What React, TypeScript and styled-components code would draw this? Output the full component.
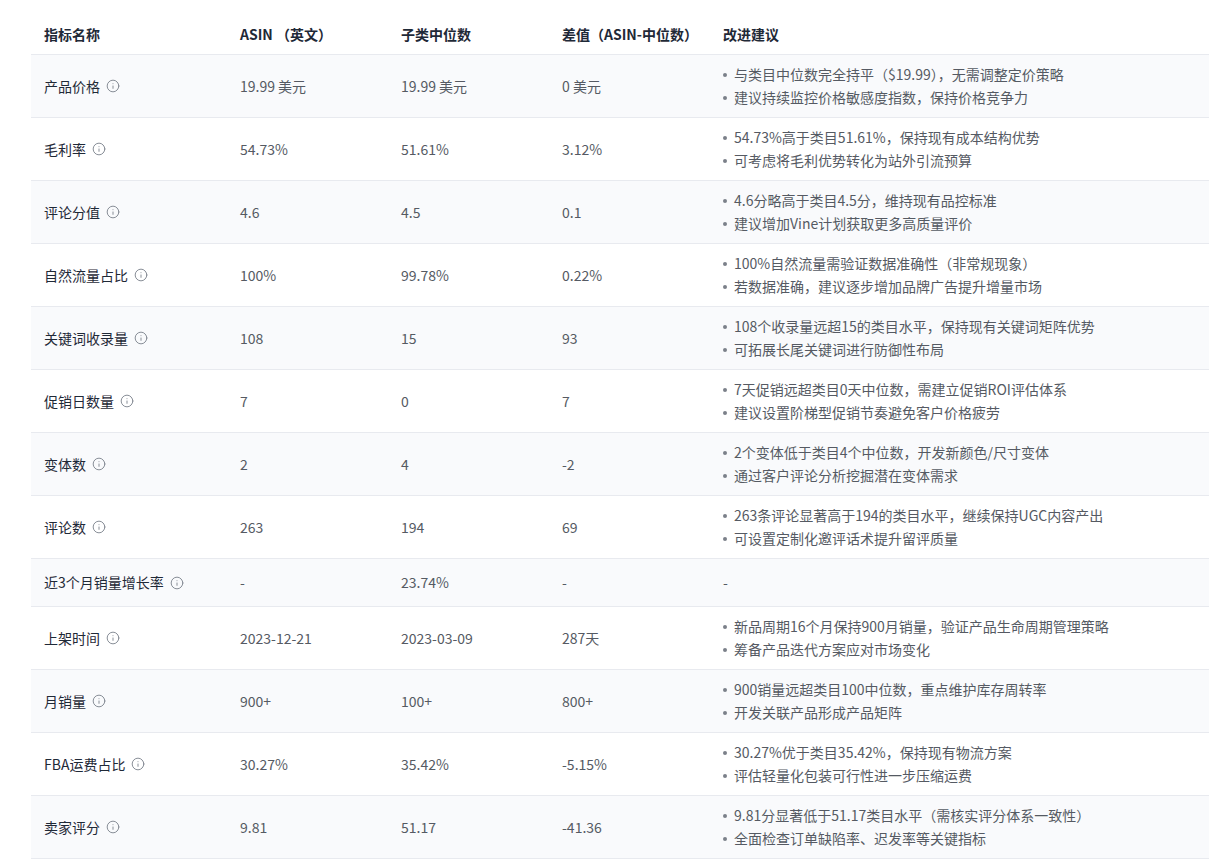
import React from "react";
import styled, { createGlobalStyle } from "styled-components";
import { Info } from "lucide-react";

const GlobalStyle = createGlobalStyle`
    html, body {
        margin: 0;
        padding: 0;
        background: #fff;
        font-family: "Noto Sans CJK SC", "Noto Sans", sans-serif;
    }
`

type Row = {
    name: string
    asin: string
    median: string
    diff: string
    tips: string[]
}

const rows: Row[] = [
    { name: "产品价格", asin: "19.99 美元", median: "19.99 美元", diff: "0 美元", tips: ["与类目中位数完全持平（$19.99），无需调整定价策略", "建议持续监控价格敏感度指数，保持价格竞争力"] },
    { name: "毛利率", asin: "54.73%", median: "51.61%", diff: "3.12%", tips: ["54.73%高于类目51.61%，保持现有成本结构优势", "可考虑将毛利优势转化为站外引流预算"] },
    { name: "评论分值", asin: "4.6", median: "4.5", diff: "0.1", tips: ["4.6分略高于类目4.5分，维持现有品控标准", "建议增加Vine计划获取更多高质量评价"] },
    { name: "自然流量占比", asin: "100%", median: "99.78%", diff: "0.22%", tips: ["100%自然流量需验证数据准确性（非常规现象）", "若数据准确，建议逐步增加品牌广告提升增量市场"] },
    { name: "关键词收录量", asin: "108", median: "15", diff: "93", tips: ["108个收录量远超15的类目水平，保持现有关键词矩阵优势", "可拓展长尾关键词进行防御性布局"] },
    { name: "促销日数量", asin: "7", median: "0", diff: "7", tips: ["7天促销远超类目0天中位数，需建立促销ROI评估体系", "建议设置阶梯型促销节奏避免客户价格疲劳"] },
    { name: "变体数", asin: "2", median: "4", diff: "-2", tips: ["2个变体低于类目4个中位数，开发新颜色/尺寸变体", "通过客户评论分析挖掘潜在变体需求"] },
    { name: "评论数", asin: "263", median: "194", diff: "69", tips: ["263条评论显著高于194的类目水平，继续保持UGC内容产出", "可设置定制化邀评话术提升留评质量"] },
    { name: "近3个月销量增长率", asin: "-", median: "23.74%", diff: "-", tips: [] },
    { name: "上架时间", asin: "2023-12-21", median: "2023-03-09", diff: "287天", tips: ["新品周期16个月保持900月销量，验证产品生命周期管理策略", "筹备产品迭代方案应对市场变化"] },
    { name: "月销量", asin: "900+", median: "100+", diff: "800+", tips: ["900销量远超类目100中位数，重点维护库存周转率", "开发关联产品形成产品矩阵"] },
    { name: "FBA运费占比", asin: "30.27%", median: "35.42%", diff: "-5.15%", tips: ["30.27%优于类目35.42%，保持现有物流方案", "评估轻量化包装可行性进一步压缩运费"] },
    { name: "卖家评分", asin: "9.81", median: "51.17", diff: "-41.36", tips: ["9.81分显著低于51.17类目水平（需核实评分体系一致性）", "全面检查订单缺陷率、迟发率等关键指标"] },
]

const Page = styled.div`
    padding: 14px 0 0 31px;
    overflow: hidden;
`

const Table = styled.table`
    width: 1200px;
    border-collapse: collapse;
    table-layout: fixed;
    font-size: 14px;
    line-height: 23px;
`

const Col = styled.col<{ w?: number }>`
    width: ${(p) => (p.w ? `${p.w}px` : "auto")};
`

const HeadCell = styled.th`
    text-align: left;
    font-weight: 700;
    color: #1f2937;
    padding: 9px 13px 8px;
    border-bottom: 1px solid #e8eaef;
    white-space: nowrap;
`

const BodyRow = styled.tr<{ $striped: boolean }>`
    background: ${(p) => (p.$striped ? "#f9fafc" : "#fff")};
    border-bottom: 1px solid #e8eaef;
`

const Cell = styled.td<{ $strong?: boolean }>`
    padding: 12px 13px;
    vertical-align: middle;
    color: ${(p) => (p.$strong ? "#1f2937" : "#555a63")};
    white-space: nowrap;
`

const TipCell = styled.td`
    padding: 8px 13px;
    vertical-align: middle;
    color: #555a63;
    white-space: nowrap;
`

const NameWrap = styled.span`
    display: inline-flex;
    align-items: center;
    gap: 6px;
`

const InfoIcon = styled(Info)`
    color: #7f858f;
    flex-shrink: 0;
`

const TipList = styled.ul`
    list-style: none;
    margin: 0;
    padding: 0;
`

const TipItem = styled.li`
    display: flex;
    align-items: center;
    &::before {
        content: "";
        width: 4px;
        height: 4px;
        border-radius: 50%;
        background: #7b8089;
        margin-right: 7px;
        flex-shrink: 0;
    }
`

export default function App() {
    return (
        <>
            <GlobalStyle />
            <Page>
                <Table>
                    <colgroup>
                        <Col w={196} />
                        <Col w={161} />
                        <Col w={161} />
                        <Col w={161} />
                        <Col />
                    </colgroup>
                    <thead>
                        <tr>
                            <HeadCell>指标名称</HeadCell>
                            <HeadCell>ASIN （英文）</HeadCell>
                            <HeadCell>子类中位数</HeadCell>
                            <HeadCell>差值（ASIN-中位数）</HeadCell>
                            <HeadCell>改进建议</HeadCell>
                        </tr>
                    </thead>
                    <tbody>
                        {rows.map((r, i) => (
                            <BodyRow key={r.name} $striped={i % 2 === 0}>
                                <Cell $strong>
                                    <NameWrap>
                                        {r.name}
                                        <InfoIcon size={14} strokeWidth={1.6} />
                                    </NameWrap>
                                </Cell>
                                <Cell>{r.asin}</Cell>
                                <Cell>{r.median}</Cell>
                                <Cell>{r.diff}</Cell>
                                {r.tips.length ? (
                                    <TipCell>
                                        <TipList>
                                            {r.tips.map((t) => (
                                                <TipItem key={t}>{t}</TipItem>
                                            ))}
                                        </TipList>
                                    </TipCell>
                                ) : (
                                    <Cell>-</Cell>
                                )}
                            </BodyRow>
                        ))}
                    </tbody>
                </Table>
            </Page>
        </>
    );
}
